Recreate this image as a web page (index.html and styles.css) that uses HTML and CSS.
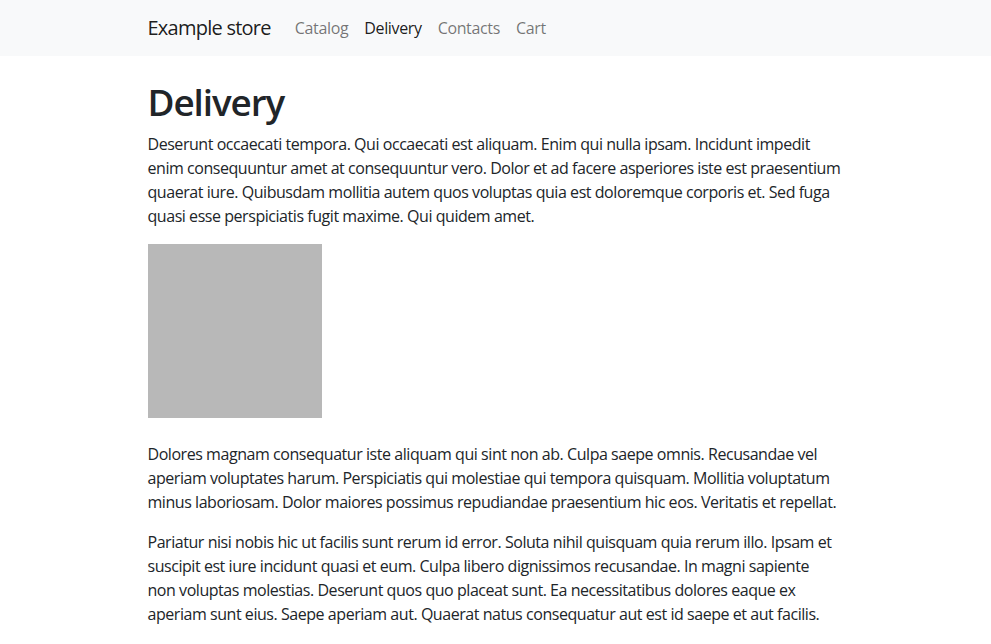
FILE: index.html
```html
<!DOCTYPE html>
<html lang="en">
<head>
<meta charset="utf-8">
<title>Delivery - Example store</title>
<link rel="stylesheet" href="styles.css">
</head>
<body>
<nav class="navbar">
  <div class="container nav-inner">
    <a class="brand" href="#">Example store</a>
    <ul class="nav-links">
      <li><a class="nav-link" href="#">Catalog</a></li>
      <li><a class="nav-link active" href="#">Delivery</a></li>
      <li><a class="nav-link" href="#">Contacts</a></li>
      <li><a class="nav-link" href="#">Cart</a></li>
    </ul>
  </div>
</nav>
<main class="container main">
  <h1 class="title">Delivery</h1>
  <p>Deserunt occaecati tempora. Qui occaecati est aliquam. Enim qui nulla ipsam. Incidunt impedit enim consequuntur amet at consequuntur vero. Dolor et ad facere asperiores iste est praesentium quaerat iure. Quibusdam mollitia autem quos voluptas quia est doloremque corporis et. Sed fuga quasi esse perspiciatis fugit maxime. Qui quidem amet.</p>
  <div class="picture"></div>
  <p>Dolores magnam consequatur iste aliquam qui sint non ab. Culpa saepe omnis. Recusandae vel aperiam voluptates harum. Perspiciatis qui molestiae qui tempora quisquam. Mollitia voluptatum minus laboriosam. Dolor maiores possimus repudiandae praesentium hic eos. Veritatis et repellat.</p>
  <p>Pariatur nisi nobis hic ut facilis sunt rerum id error. Soluta nihil quisquam quia rerum illo. Ipsam et suscipit est iure incidunt quasi et eum. Culpa libero dignissimos recusandae. In magni sapiente<br>non voluptas molestias. Deserunt quos quo placeat sunt. Ea necessitatibus dolores eaque ex aperiam sunt eius. Saepe aperiam aut. Quaerat natus consequatur aut est id saepe et aut facilis.</p>
</main>
</body>
</html>
```
FILE: styles.css
```css
* { box-sizing: border-box; }
html, body { margin: 0; padding: 0; }
body {
  font-family: "Open Sans", "Noto Sans", sans-serif;
  font-size: 16px;
  line-height: 1.5;
  color: #212529;
  background: #fff;
  letter-spacing: -0.45px;
}
.container {
  max-width: 720px;
  margin: 0 auto;
  padding: 0 12px;
}
.navbar {
  background: #f8f9fa;
  padding: 8px 0;
}
.nav-inner {
  display: flex;
  align-items: center;
}
.brand {
  font-size: 20px;
  line-height: 30px;
  padding: 5px 0;
  margin-right: 16px;
  color: rgba(0,0,0,.9);
  text-decoration: none;
  letter-spacing: -0.75px;
}
.nav-links {
  display: flex;
  list-style: none;
  margin: 0;
  padding: 0;
}
.nav-link {
  display: block;
  padding: 8px;
  color: rgba(0,0,0,.55);
  text-decoration: none;
  letter-spacing: -0.35px;
}
.nav-link.active { color: rgba(0,0,0,.9); }
.main { padding-top: 24px; }
.title {
  font-size: 36.86px;
  line-height: 1.2;
  font-weight: 600;
  margin: 0 0 8px;
  letter-spacing: -1.1px;
}
p { margin: 0 0 16px; }
.picture {
  width: 174px;
  height: 174px;
  background: #b8b8b8;
  margin-bottom: 24px;
}
```
